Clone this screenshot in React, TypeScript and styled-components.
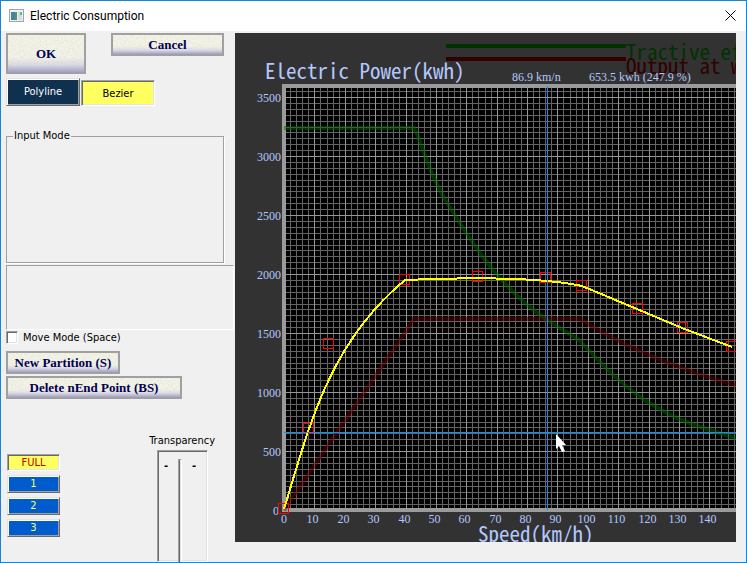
import React, { useState } from "react";
import styled, { createGlobalStyle, css } from "styled-components";

const UI_FONT = '"DejaVu Sans Condensed", "DejaVu Sans", sans-serif';
const SERIF = '"Liberation Serif", serif';
const GOTHIC = '"Noto Sans Mono CJK JP", "Noto Sans CJK JP", monospace';

/* Fine speckle laid over the stone buttons. */
const SPECKLE = `url("data:image/svg+xml,${encodeURIComponent(
  '<svg xmlns="http://www.w3.org/2000/svg" width="96" height="48"><filter id="n"><feTurbulence type="fractalNoise" baseFrequency="0.6" numOctaves="2"/><feColorMatrix values="0 0 0 0 0.5 0 0 0 0 0.5 0 0 0 0 0.55 0.6 0 0 0 -0.25"/></filter><rect width="96" height="48" filter="url(#n)"/></svg>'
)}")`;

const GlobalStyle = createGlobalStyle`
  * { box-sizing: border-box; }
  body { margin: 0; background: #f0f0f0; }
  button, input { margin: 0; padding: 0; }
`;

const Dialog = styled.div`
  display: flex;
  flex-direction: column;
  height: 100vh;
  overflow: hidden;
  border: 1px solid #1883d7;
  background: #f0f0f0;
  color: #000;
  font: 11px/14px ${UI_FONT};
`;

const TitleBar = styled.header`
  display: flex;
  flex: none;
  align-items: center;
  gap: 6px;
  height: 30px;
  padding: 0 8px 1px;
  background: #fff;
`;

const Title = styled.h1`
  flex: 1;
  margin: 0;
  font: 400 12px/16px Roboto, "Open Sans", sans-serif;
`;

const CloseButton = styled.button`
  display: flex;
  width: 16px;
  height: 16px;
  align-items: center;
  justify-content: center;
  border: 0;
  background: none;
`;

const Body = styled.main`
  display: flex;
  flex: 1;
  min-height: 0;
  align-items: flex-start;
  padding: 2px 10px 0 5px;
`;

const Side = styled.aside`
  display: flex;
  flex: none;
  flex-direction: column;
  width: 229px;
  height: 100%;
`;

const ActionRow = styled.div`
  display: flex;
  align-items: flex-start;
  justify-content: space-between;
  padding-right: 11px;
`;

const StoneButton = styled.button<{ $w: number; $h: number }>`
  width: ${(p) => p.$w}px;
  height: ${(p) => p.$h}px;
  border: 2px solid #a0a0a0;
  background: ${SPECKLE}, linear-gradient(#f3f4e4 0%, #f2f2e8 60%, #dcdce2 80%, #a0a0cc 100%);
  color: #000050;
  font: bold 13px/16px ${SERIF};
`;

const TabRow = styled.div`
  display: flex;
  align-items: flex-end;
  gap: 1px;
  height: 28px;
  margin-top: 4px;
`;

const raised = css`
  border: 1px solid;
  border-color: #e3e3e3 #696969 #696969 #e3e3e3;
  box-shadow: inset 1px 1px #fff, inset -1px -1px #a0a0a0;
`;
const sunken = css`
  border: 1px solid;
  border-color: #a0a0a0 #fff #fff #a0a0a0;
  box-shadow: inset 1px 1px #696969, inset -1px -1px #e3e3e3;
`;

const ModeButton = styled.button<{ $on: boolean }>`
  ${(p) => (p.$on ? sunken : raised)}
  width: 74px;
  height: ${(p) => (p.$on ? 26 : 28)}px;
  padding-top: ${(p) => (p.$on ? 2 : 0)}px;
  background: ${(p) => (p.$on ? "#ffff60" : "#103050")};
  color: ${(p) => (p.$on ? "#000" : "#fff")};
  font: 11px/14px ${UI_FONT};
`;

const Group = styled.fieldset`
  width: 218px;
  height: 134px;
  margin: 23px 0 0;
  padding: 0 6px;
  border: 1px solid #a0a0a0;
  box-shadow: 1px 1px #fff;
`;

const GroupTitle = styled.legend`
  padding: 0 1px;
  background: #f0f0f0;
`;

const Well = styled.div`
  width: 228px;
  height: 65px;
  margin-top: 2px;
  border: 1px solid;
  border-color: #a0a0a0 #fff #fff #a0a0a0;
`;

const CheckRow = styled.label`
  display: flex;
  align-items: center;
  gap: 5px;
  height: 15px;
`;

const Check = styled.input`
  ${sunken}
  width: 12px;
  height: 13px;
  appearance: none;
  background: #fff;
  &:checked { background: #103050; }
`;

const Stack = styled.div`
  display: flex;
  flex-direction: column;
  gap: 2px;
  margin-top: 6px;
`;

const Bottom = styled.div`
  display: flex;
  flex: 1;
  min-height: 0;
  justify-content: space-between;
  padding: 35px 20px 0 1px;
`;

const Levels = styled.div`
  display: flex;
  flex-direction: column;
  gap: 4px;
  padding-top: 20px;
`;

const LevelButton = styled.button<{ $on: boolean }>`
  ${(p) => (p.$on ? sunken : raised)}
  width: 53px;
  height: ${(p) => (p.$on ? 17 : 18)}px;
  background: ${(p) => (p.$on ? "#ffff60" : "#005ccc")};
  color: ${(p) => (p.$on ? "#c00000" : "#ffff60")};
  font: 11px/12px ${UI_FONT};
`;

const SliderBlock = styled.div`
  display: flex;
  flex-direction: column;
  align-items: center;
`;

const SliderWell = styled.div`
  ${sunken}
  display: flex;
  flex: 1;
  justify-content: center;
  gap: 10px;
  width: 51px;
  min-height: 0;
  margin-top: 2px;
  padding: 8px 4px 0 0;
  font-weight: bold;
`;

const Range = styled.input`
  width: 4px;
  height: 150px;
  flex: none;
  appearance: none;
  writing-mode: vertical-lr;
  border: 1px solid;
  border-color: #a0a0a0 #fff #fff #a0a0a0;
  background: linear-gradient(90deg, #696969 50%, #e3e3e3 50%);
  &::-webkit-slider-thumb { appearance: none; width: 0; height: 0; }
`;

const ChartPanel = styled.section`
  flex: 1;
  min-width: 0;
  height: 509px;
  overflow: hidden;
  background: #323232;
`;

const ChartSvg = styled.svg`
  display: block;
  width: 100%;
  height: 100%;
  fill: none;
  .axis { fill: #b4c8ff; font: 12px ${SERIF}; }
  .heading { font: 21px ${GOTHIC}; }
`;

/* Chart space: (49, 477) is the origin of both axes. */
const X = (v: number) => Math.round(49 + v * 3.038) + 0.5;
const Y = (v: number) => Math.round(477 - v * 0.118) + 0.5;
const speeds = Array.from({ length: 250 }, (_, i) => i * 2);
const speedLabels = Array.from({ length: 15 }, (_, i) => i * 10);
const powers = Array.from({ length: 72 }, (_, i) => i * 50);
const handles = [
  [48, 475], [73, 395], [93, 310], [169, 246], [242, 243],
  [310, 244], [346, 252], [402, 275], [447, 294], [496, 313],
];

function Chart() {
  return (
    <ChartSvg role="img" aria-label="Electric power by speed">
      <rect x="51" y="55" width="1500" height="420" fill="#000" />
      <g shapeRendering="crispEdges">
        {speeds.map((v) => v % 10 !== 0 && (
          <line key={v} x1={X(v)} x2={X(v)} y1="55" y2="475" stroke="#646464" />
        ))}
        {powers.map((v) => v % 500 !== 0 && (
          <line key={v} x1="51" x2="1550" y1={Y(v)} y2={Y(v)} stroke="#646464" />
        ))}
        {speeds.map((v) => v % 10 === 0 && (
          <line key={v} x1={X(v)} x2={X(v)} y1="55" y2="475" stroke="#969696" />
        ))}
        {powers.map((v) => v % 500 === 0 && (
          <line key={v} x1="51" x2="1550" y1={Y(v)} y2={Y(v)} stroke="#969696" />
        ))}
        <path d="M1550 53H49V477H1550" stroke="#9b9b9b" strokeWidth="4" />
        <path d="M211 13H391" stroke="#003200" strokeWidth="4" />
        <path d="M211 26H391" stroke="#320000" strokeWidth="4" />
      </g>
      <text className="heading" x="391" y="27" fill="#003200">Tractive effort</text>
      <text className="heading" x="391" y="41" fill="#320000">Output at wheel</text>
      <text className="axis heading" x="30" y="46">Electric Power(kwh)</text>
      <text className="axis heading" x="243" y="509">Speed(km/h)</text>
      <text className="axis" x="277" y="48">86.9 km/n</text>
      <text className="axis" x="354" y="48">653.5 kwh (247.9 %)</text>
      {powers.map((v) => v % 500 === 0 && (
        <text key={v} className="axis" x={v === 0 ? 44 : 46} y={Y(v) + 4} textAnchor="end">{v}</text>
      ))}
      {speedLabels.map((v) => (
        <text key={v} className="axis" x={v === 0 ? 49 : X(v) - 2} y="490" textAnchor="middle">{v}</text>
      ))}
      <g strokeWidth="4" strokeLinejoin="round">
        <path stroke="#006400" strokeOpacity=".5" d="M49 95H179L183 103C192 130 200 150 211 168C226 193 235 206 245 220C264 246 286 269 312 287L344 307L360 324C390 356 425 383 475 397L501 405" />
        <path stroke="#640000" strokeOpacity=".5" d="M49 477L179 286H345C360 296 390 312 414 322C440 333 470 344 501 352" />
      </g>
      <g shapeRendering="crispEdges">
        <g stroke="#f00">
          {handles.map(([x, y]) => (
            <rect key={x} x={x - 4.5} y={y - 4.5} width="10" height="10" />
          ))}
        </g>
        <path stroke="#ff0" strokeWidth="2" d="M49 476C74 395 93 311 170 247C242 244 310 245 347 253L402 276L447 295L497 314" />
        <path stroke="#0096ff" d="M49 399.5H1550M312.5 53V477" />
      </g>
      <path fill="#fff" d="M321 401V416L324 413L327 419L330 418L327 412H331Z" />
    </ChartSvg>
  );
}

export default function App() {
  const [mode, setMode] = useState("Bezier");
  const [level, setLevel] = useState("FULL");
  return (
    <Dialog>
      <GlobalStyle />
      <TitleBar>
        <svg width="15" height="13" viewBox="0 0 15 13">
          <rect x=".5" y=".5" width="14" height="12" fill="#eef1f4" stroke="#a0a5aa" />
          <rect x="2" y="3" width="6" height="8" fill="#4a8f87" />
          <rect x="2" y="3" width="3" height="8" fill="#4a78a0" opacity=".6" />
          <rect x="9" y="3" width="4" height="8" fill="#d5dce0" />
          <rect x="11" y="3" width="2" height="3" fill="#70b080" />
        </svg>
        <Title>Electric Consumption</Title>
        <CloseButton aria-label="Close">
          <svg width="11" height="11" viewBox="0 0 11 11" stroke="#000">
            <path d="M.5 .5L10.5 10.5M10.5 .5L.5 10.5" />
          </svg>
        </CloseButton>
      </TitleBar>
      <Body>
        <Side>
          <ActionRow>
            <StoneButton $w={80} $h={41}>OK</StoneButton>
            <StoneButton $w={113} $h={23}>Cancel</StoneButton>
          </ActionRow>
          <TabRow>
            {["Polyline", "Bezier"].map((m) => (
              <ModeButton key={m} $on={mode === m} aria-pressed={mode === m} onClick={() => setMode(m)}>{m}</ModeButton>
            ))}
          </TabRow>
          <Group>
            <GroupTitle>Input Mode</GroupTitle>
          </Group>
          <Well />
          <CheckRow>
            <Check type="checkbox" />
            Move Mode (Space)
          </CheckRow>
          <Stack>
            <StoneButton $w={114} $h={23}>New Partition (S)</StoneButton>
            <StoneButton $w={176} $h={23}>Delete nEnd Point (BS)</StoneButton>
          </Stack>
          <Bottom>
            <Levels>
              {["FULL", "1", "2", "3"].map((l) => (
                <LevelButton key={l} $on={level === l} aria-pressed={level === l} onClick={() => setLevel(l)}>{l}</LevelButton>
              ))}
            </Levels>
            <SliderBlock>
              <label htmlFor="transparency">Transparency</label>
              <SliderWell>
                <span>-</span>
                <Range id="transparency" type="range" />
                <span>-</span>
              </SliderWell>
            </SliderBlock>
          </Bottom>
        </Side>
        <ChartPanel>
          <Chart />
        </ChartPanel>
      </Body>
    </Dialog>
  );
}
